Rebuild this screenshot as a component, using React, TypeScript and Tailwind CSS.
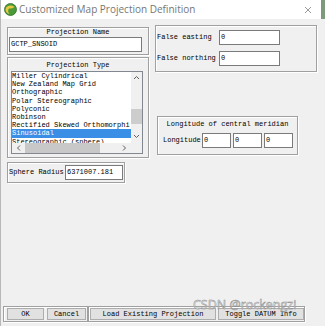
const mono = "font-['Liberation_Mono',monospace] text-[7px] leading-[9px] text-black"

const groupBox = "border border-[#a0a0a0] shadow-[1px_1px_0_#fff,inset_1px_1px_0_#fff]"

const field = "bg-white border border-[#7a7a7a] h-[15px] px-[1px] flex items-center"

const projections = [
    'Miller Cylindrical',
    'New Zealand Map Grid',
    'Orthographic',
    'Polar Stereographic',
    'Polyconic',
    'Robinson',
    'Rectified Skewed Orthomorphi',
    'Sinusoidal',
    'Stereographic (sphere)',
]

const TextField = ({ value, className }: { value: string, className: string }) => (
    <div className={`${field} ${className}`}>
        <span className={mono}>{value}</span>
    </div>
)

const ProjectionList = ({ selected }: { selected: string }) => (
    <div className="ml-[3px] mt-[1px] w-[132px] h-[83px] border border-[#828790] bg-white flex flex-col overflow-hidden">
        <div className="flex h-[71px] shrink-0 overflow-hidden">
            <div className="w-[119px] overflow-hidden">
                {projections.map(p => (
                    <div
                        key={p}
                        className={`h-[8.2px] whitespace-nowrap leading-[8.2px] font-['Liberation_Mono',monospace] text-[7px] ${p === selected ? 'bg-[#3a8ee6] text-white' : 'text-black'}`}
                    >
                        {p}
                    </div>
                ))}
            </div>
            <div className="w-[11px] bg-[#f0f0f0] flex flex-col items-center">
                <svg width="11" height="10" viewBox="0 0 11 10" className="mt-[1px] shrink-0">
                    <path d="M3 6 L5.5 3.5 L8 6" stroke="#606060" strokeWidth="1" fill="none" />
                </svg>
                <div className="mt-[26px] w-[11px] h-[15px] shrink-0 bg-[#cdcdcd]" />
                <svg width="11" height="10" viewBox="0 0 11 10" className="mt-[7px] shrink-0">
                    <path d="M3 4 L5.5 6.5 L8 4" stroke="#606060" strokeWidth="1" fill="none" />
                </svg>
            </div>
        </div>
        <div className="flex h-[10px] shrink-0 bg-[#f0f0f0]">
            <div className="w-[119px] flex items-center">
                <svg width="10" height="10" viewBox="0 0 10 10" className="ml-[2px] shrink-0">
                    <path d="M6 2.5 L3.5 5 L6 7.5" stroke="#606060" strokeWidth="1" fill="none" />
                </svg>
                <div className="ml-[1px] w-[75px] h-[10px] shrink-0 bg-[#c8c8c8]" />
                <svg width="10" height="10" viewBox="0 0 10 10" className="ml-[19px] shrink-0">
                    <path d="M4 2.5 L6.5 5 L4 7.5" stroke="#606060" strokeWidth="1" fill="none" />
                </svg>
            </div>
            <div className="w-[11px] bg-[#f0f0f0]" />
        </div>
    </div>
)

const Button = ({ label, className }: { label: string, className: string }) => (
    <div className={`h-[12px] bg-[#e1e1e1] border border-[#adadad] flex items-center justify-center ${className}`}>
        <span className={mono}>{label}</span>
    </div>
)

const App = () => {
    return (
        <div className="relative w-[325px] h-[326px] bg-[#f0f0f0] flex flex-col overflow-hidden border-l border-[#b8b8b8]">
            <div className="h-[19px] bg-white flex items-center shrink-0">
                <svg width="13" height="13" viewBox="0 0 13 13" className="ml-[3px]">
                    <circle cx="6.5" cy="6.5" r="6" fill="#4a9a3a" />
                    <path d="M2 4.5 Q6 1 10.5 4 Q8 6 5 5.5 Q3 8 5.5 11 Q2 10 1.5 7 Z" fill="#e8c840" />
                    <circle cx="6.5" cy="6.5" r="6" fill="none" stroke="#2f6f2a" strokeWidth="0.8" />
                </svg>
                <span className="ml-[2px] font-['Open_Sans',sans-serif] text-[10px] text-[#767676]">
                    Customized Map Projection Definition
                </span>
                <svg width="8" height="8" viewBox="0 0 8 8" className="ml-auto mr-[9px]">
                    <path d="M1 1 L7 7 M7 1 L1 7" stroke="#808080" strokeWidth="0.8" />
                </svg>
                <div className="w-[4px] h-full bg-[#7d9b7a]" />
            </div>

            <div className="flex pl-[6px] pt-[6px]">
                <div className="w-[142px] mt-[2px] flex flex-col">
                    <div className={`${groupBox} h-[28px] flex flex-col`}>
                        <div className={`${mono} text-center`}>Projection Name</div>
                        <TextField value="GCTP_SNSOID" className="ml-[1px] w-[133px] h-[13px]" />
                    </div>

                    <div className={`${groupBox} mt-[2px] h-[101px] flex flex-col`}>
                        <div className={`${mono} text-center mt-[3px]`}>Projection Type</div>
                        <ProjectionList selected="Sinusoidal" />
                    </div>

                    <div className={`${groupBox} mt-[4px] w-[118px] h-[21px] flex items-center`}>
                        <span className={`${mono} ml-[1px] w-[56px]`}>Sphere Radius</span>
                        <TextField value="6371007.181" className="w-[58px]" />
                    </div>
                </div>

                <div className="ml-[6px] flex flex-col">
                    <div className={`${groupBox} w-[162px] h-[47px] flex flex-col pt-[4px] gap-[6px]`}>
                        <div className="flex items-center">
                            <span className={`${mono} ml-[1px] w-[62px]`}>False easting</span>
                            <TextField value="0" className="w-[61px]" />
                        </div>
                        <div className="flex items-center">
                            <span className={`${mono} ml-[1px] w-[62px]`}>False northing</span>
                            <TextField value="0" className="w-[61px]" />
                        </div>
                    </div>

                    <div className={`${groupBox} mt-[44px] ml-[2px] w-[141px] h-[39px] flex flex-col`}>
                        <div className={`${mono} text-center mt-[3px]`}>Longitude of central meridian</div>
                        <div className="flex items-center mt-[4px]">
                            <span className={`${mono} ml-[5px] w-[39px]`}>Longitude</span>
                            <TextField value="0" className="w-[29px]" />
                            <TextField value="0" className="ml-[2px] w-[29px]" />
                            <TextField value="0" className="ml-[2px] w-[29px]" />
                        </div>
                    </div>
                </div>
            </div>

            <div className="mt-auto mb-[4px] ml-[2px] flex">
                <div className={`${groupBox} w-[85px] h-[16px] flex items-center`}>
                    <Button label="OK" className="ml-[3px] w-[37px]" />
                    <Button label="Cancel" className="ml-[3px] w-[39px]" />
                </div>
                <div className={`${groupBox} w-[217px] h-[16px] flex items-center`}>
                    <Button label="Load Existing Projection" className="ml-[1px] w-[126px]" />
                    <Button label="Toggle DATUM Info" className="ml-[2px] w-[86px]" />
                </div>
            </div>

            <div className="absolute left-[192px] top-[297px] font-['Open_Sans',sans-serif] text-[12.5px] leading-[16px] text-white/70 [-webkit-text-stroke:0.5px_#8a8a8a]">
                CSDN @rockengzi
            </div>
        </div>
    )
}

export default App
